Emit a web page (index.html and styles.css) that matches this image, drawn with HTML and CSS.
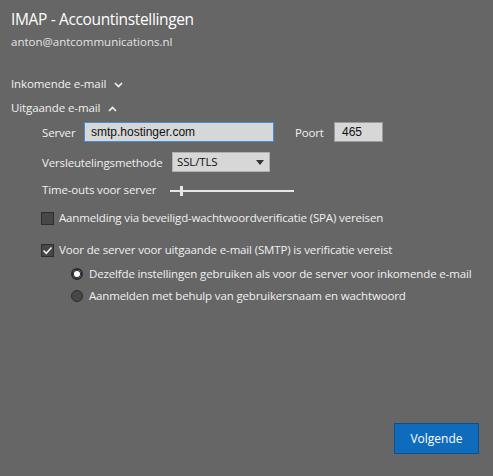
FILE: index.html
```html
<!DOCTYPE html>
<html lang="nl">
<head>
<meta charset="utf-8">
<title>IMAP - Accountinstellingen</title>
<link rel="stylesheet" href="styles.css">
</head>
<body>
<div class="page">
  <h1 class="title">IMAP - Accountinstellingen</h1>
  <div class="email">anton@antcommunications.nl</div>

  <div class="section-head sh-in">Inkomende e-mail
    <svg class="chev" width="9" height="6" viewBox="0 0 9 6"><path d="M1 1 L4.5 4.5 L8 1" fill="none" stroke="#f0f0f0" stroke-width="1.7"/></svg>
  </div>
  <div class="section-head sh-out">Uitgaande e-mail
    <svg class="chev" width="9" height="6" viewBox="0 0 9 6"><path d="M1 5 L4.5 1.5 L8 5" fill="none" stroke="#f0f0f0" stroke-width="1.7"/></svg>
  </div>

  <div class="sub">
    <div class="row row-server">
      <span class="lbl lbl-server">Server</span>
      <div class="input input-server">smtp.hostinger.com</div>
      <span class="lbl lbl-port">Poort</span>
      <div class="input input-port">465</div>
    </div>
    <div class="row row-enc">
      <span class="lbl lbl-enc">Versleutelingsmethode</span>
      <div class="select">SSL/TLS
        <svg class="tri" width="8" height="5" viewBox="0 0 8 5"><path d="M0 0 H8 L4 5 Z" fill="#333"/></svg>
      </div>
    </div>
    <div class="row row-time">
      <span class="lbl lbl-time">Time-outs voor server</span>
      <div class="slider"><span class="thumb"></span></div>
    </div>
  </div>

  <div class="check check-1"><span class="box"></span>Aanmelding via beveiligd-wachtwoordverificatie (SPA) vereisen</div>
  <div class="check check-2"><span class="box">
    <svg width="11" height="11" viewBox="0 0 11 11"><path d="M1.5 5.5 L4.3 8.3 L9.5 2.5" fill="none" stroke="#f2f2f2" stroke-width="1.5"/></svg>
  </span>Voor de server voor uitgaande e-mail (SMTP) is verificatie vereist</div>

  <div class="radios">
    <div class="radio radio-1"><span class="dot on"></span>Dezelfde instellingen gebruiken als voor de server voor inkomende e-mail</div>
    <div class="radio radio-2"><span class="dot"></span>Aanmelden met behulp van gebruikersnaam en wachtwoord</div>
  </div>

  <div class="actions">
    <button class="btn">Volgende</button>
  </div>
</div>
</body>
</html>
```

FILE: styles.css
```css
html, body {
  margin: 0;
  padding: 0;
  background: #666666;
}
body {
  width: 493px;
  height: 476px;
  overflow: hidden;
  font-family: "Open Sans", "Noto Sans", sans-serif;
  color: #f0f0f0;
  font-size: 11.5px;
  letter-spacing: -0.15px;
}
.page {
  box-sizing: border-box;
  height: 476px;
  padding: 0 11px 22px;
  display: flex;
  flex-direction: column;
}
.title {
  margin: 7px 0 0;
  font-size: 15.5px;
  font-weight: 400;
  line-height: 24px;
  color: #ffffff;
  letter-spacing: -0.35px;
}
.email {
  margin-top: 3px;
  font-size: 11.5px;
  line-height: 16px;
  color: #e4e4e4;
  letter-spacing: 0;
}
.section-head {
  display: flex;
  align-items: center;
  line-height: 16px;
  letter-spacing: -0.1px;
}
.sh-in { margin-top: 26px; }
.sh-out { margin-top: 8px; }
.chev { margin-left: 8px; margin-top: 1px; }

.sub {
  padding-left: 31px;
  display: flex;
  flex-direction: column;
}
.row {
  display: flex;
  align-items: center;
  height: 20px;
}
.row-server { margin-top: 6px; }
.row-enc { margin-top: 10px; }
.row-time { margin-top: 7px; }
.lbl { white-space: nowrap; }
.lbl-server { width: 42px; }
.lbl-port { width: 39px; margin-left: 21px; }
.lbl-enc { width: 130px; }
.lbl-time { width: 128px; }

.input {
  box-sizing: border-box;
  height: 20px;
  background: #d7d7d7;
  border: 1px solid #9c9c9c;
  color: #111;
  font-family: "Liberation Sans", Arial, sans-serif;
  font-size: 12px;
  letter-spacing: 0;
  line-height: 18px;
  padding: 0 6px;
}
.input-server {
  width: 190px;
  border-color: #3f8fdb;
}
.input-port { width: 49px; padding-left: 7px; }

.select {
  box-sizing: border-box;
  position: relative;
  width: 98px;
  height: 20px;
  background: #d7d7d7;
  border: 1px solid #b0b0b0;
  color: #111;
  line-height: 18px;
  padding-left: 4px;
}
.tri {
  position: absolute;
  right: 5px;
  top: 7px;
}

.slider {
  position: relative;
  width: 124px;
  height: 2px;
  background: #e6e6e6;
  margin-top: 3px;
}
.thumb {
  position: absolute;
  left: 10px;
  top: -4px;
  width: 3px;
  height: 10px;
  background: #e6e6e6;
}

.check {
  display: flex;
  align-items: center;
  margin-left: 30px;
  line-height: 16px;
}
.check-1 { margin-top: 11px; }
.check-2 { margin-top: 16px; }
.box {
  box-sizing: border-box;
  width: 13px;
  height: 13px;
  border: 1px solid #2e2e2e;
  background: #474747;
  margin-right: 5px;
  display: flex;
  align-items: center;
  justify-content: center;
}
.box svg { display: block; }

.radios {
  margin-left: 60px;
  display: flex;
  flex-direction: column;
}
.radio {
  display: flex;
  align-items: center;
  line-height: 16px;
  white-space: nowrap;
}
.radio-1 { margin-top: 8px; }
.radio-2 { margin-top: 6px; }
.dot {
  box-sizing: border-box;
  width: 12px;
  height: 12px;
  border-radius: 50%;
  border: 1px solid #2b2b2b;
  background: #474747;
  margin-right: 6px;
}
.dot.on {
  border: 2px solid #2b2b2b;
  background: #ffffff;
  box-shadow: inset 0 0 0 1px #2b2b2b;
}

.actions {
  margin-top: auto;
  display: flex;
  justify-content: flex-end;
  padding-right: 3px;
}
.btn {
  box-sizing: border-box;
  width: 85px;
  height: 31px;
  background: #0f6cbd;
  border: 1px solid #0a4f8e;
  color: #ffffff;
  font-family: "Open Sans", "Noto Sans", sans-serif;
  font-size: 12px;
  letter-spacing: 0;
  padding: 0;
}
```
